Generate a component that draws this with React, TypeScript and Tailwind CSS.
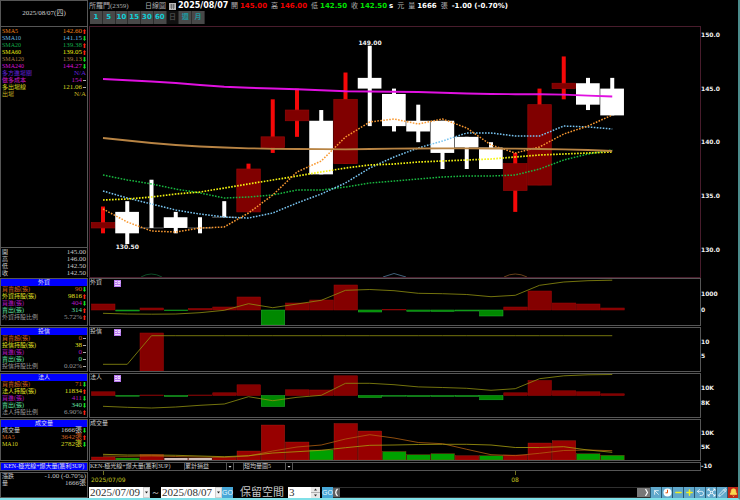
import React, { useState } from 'react';
import { ArrowUpLeft, Bell, Clock, Minimize2, Minus, Pencil, Plus, Undo2 } from 'lucide-react';

type Trend = 'up' | 'down' | 'flat';

interface Row {
  label: string;
  value: string;
  color: string;
  trend?: Trend;
}

interface Candle {
  o: number;
  h: number;
  l: number;
  c: number;
}

const STEP = 24.25;
const cx = (i: number) => 13 + i * STEP;
const priceY = (p: number) => 8 + (150 - p) * 10.72;

const CANDLES: Candle[] = [
  { o: 132, h: 134, l: 131.5, c: 132.5 },
  { o: 133.5, h: 134.5, l: 130.5, c: 131.5 },
  { o: 132, h: 136.5, l: 132, c: 132 },
  { o: 133, h: 133.5, l: 131.5, c: 132 },
  { o: 132, h: 133, l: 131.5, c: 132 },
  { o: 133, h: 134.5, l: 133, c: 133 },
  { o: 133.5, h: 138, l: 133.5, c: 137.5 },
  { o: 139.5, h: 144, l: 139, c: 140.5 },
  { o: 142, h: 145, l: 140.5, c: 143 },
  { o: 142, h: 143, l: 137, c: 137 },
  { o: 138, h: 146.5, l: 138, c: 144 },
  { o: 146, h: 149, l: 141.5, c: 145 },
  { o: 144.5, h: 145, l: 141, c: 141.5 },
  { o: 142, h: 143.5, l: 140, c: 141 },
  { o: 142, h: 142, l: 137.5, c: 139 },
  { o: 140.5, h: 140.5, l: 137.5, c: 139.5 },
  { o: 139.5, h: 140, l: 137.5, c: 137.5 },
  { o: 135.5, h: 139, l: 133.5, c: 138 },
  { o: 136, h: 145, l: 136, c: 143.5 },
  { o: 145, h: 148, l: 144, c: 145.5 },
  { o: 145.5, h: 146, l: 143, c: 143.5 },
  { o: 145, h: 146, l: 142.5, c: 142.5 },
];

// one y per candle
const SMA5 = [182, 195, 204, 205, 201, 200, 186, 168, 145, 134, 110, 95, 92, 97, 92, 101, 118, 126, 120, 107, 99, 88];
const SMA10 = [164, 171, 177, 183, 187, 190, 191, 186, 176, 167, 156, 141, 130, 121, 114, 106, 106, 109, 109, 99, 100, 102];
const SMA20 = [148, 153, 157, 162, 166, 171, 170, 168, 163, 163, 160, 156, 154, 152, 150, 149, 149, 148, 142, 133, 127, 123];
const SMA60 = [173, 172, 170, 167, 165, 161, 157, 153, 149, 145, 141, 138, 137, 135, 134, 133, 132, 130, 128, 127, 126, 125];
const SMA120 = [111, 113.5, 116, 118, 119.5, 120.5, 121.3, 121.8, 122, 122.2, 122.3, 122, 121.7, 121.5, 121.4, 121.4, 121.5, 121.7, 122, 122.3, 123, 124];
const SMA240 = [52, 53.2, 54.5, 56, 58, 59.7, 60.8, 61.5, 62.3, 63.2, 64.2, 64.5, 64.7, 65, 65.8, 66.5, 67, 67.2, 67.2, 67.6, 68.6, 69.5];

const FOREIGN = [6, -1, 2, -0.7, 1.5, 3, 13, -15, 7, 10, 25, -2, 0.6, -1.3, -1.5, -1, -6, 3, 19, 7, 6, 2];
const FOREIGN_LINE = [34.3, 35, 35.2, 35, 33.7, 31.3, 24.7, 28.7, 25, 21.3, 11.3, 10.5, 11.7, 14.3, 14.7, 15.5, 17.7, 16.3, 6.3, 3, 1.7, 1.2];
const TRUST = [0, 0, 38, 0, 0, 0, 0, 0, 0, 0, 0, 0, 0, 0, 0, 0, 0, 0, 0, 0, 0, 0];
const TRUST_LINE = [36.3, 36.3, 7.7, 7.7, 7.7, 7.7, 7.7, 7.7, 7.7, 7.7, 7.7, 7.7, 7.7, 7.7, 7.7, 7.7, 7.7, 7.7, 7.7, 7.7, 7.7, 7.7];
const LEGAL = [3.7, -0.7, 0.5, -1, 0.5, 2.7, 10.7, -11, 5.7, 5.5, 19.7, -2, -0.7, -1, -1, -1, -4.3, 2.7, 15, 4.7, 3.7, 1.7];
const LEGAL_LINE = [32.3, 33.3, 34, 33, 31.3, 30, 22.7, 26.7, 23.3, 21.3, 9.3, 9.3, 10.7, 12.9, 13.5, 14.3, 16.3, 14.7, 4.7, 1.8, 0.8, 0.5];
const VOLUME = [3, 2, 5.5, 2, 2, 2.7, 9, 35, 18, 10, 36.5, 29, 8.5, 5.3, 6.3, 4.3, 4.3, 5, 17, 19.3, 6.3, 4.7];
const VOLUME_COLOR = 'rgrwwrrrrgrrgggrgrrrgg';
const VOL_MA5 = [36, 36.3, 36, 36.5, 37, 37.3, 36, 31, 27, 25, 19, 14.7, 18, 22.5, 23.7, 29.3, 34.7, 35.6, 33.3, 30.5, 30, 30.7];
const VOL_MA10 = [34.3, 35, 35, 35.3, 36, 36.7, 35.7, 33, 31.7, 30.3, 27.7, 25.3, 25, 24.5, 24.3, 24.3, 25, 27.5, 27.5, 26.7, 30, 32.3];

const INDICATORS: Row[] = [
  { label: 'SMA5', value: '142.60', color: 'text-[#f08018]', trend: 'up' },
  { label: 'SMA10', value: '141.15', color: 'text-[#68b8e0]', trend: 'down' },
  { label: 'SMA20', value: '139.38', color: 'text-[#10a848]', trend: 'up' },
  { label: 'SMA60', value: '139.05', color: 'text-[#e8e810]', trend: 'up' },
  { label: 'SMA120', value: '139.13', color: 'text-[#a87840]', trend: 'down' },
  { label: 'SMA240', value: '144.27', color: 'text-[#d810d8]', trend: 'down' },
  { label: '多方進場關', value: 'N/A', color: 'text-[#6020d8]' },
  { label: '做多成本', value: '154', color: 'text-[#c818c8]', trend: 'flat' },
  { label: '多出場線', value: '121.06', color: 'text-[#d8d820]', trend: 'flat' },
  { label: '出場', value: 'N/A', color: 'text-[#c0b020]' },
];

const QUOTE: Row[] = [
  { label: '開', value: '145.00', color: 'text-[#c8c8c8]' },
  { label: '高', value: '146.00', color: 'text-[#c8c8c8]' },
  { label: '低', value: '142.50', color: 'text-[#c8c8c8]' },
  { label: '收', value: '142.50', color: 'text-[#c8c8c8]' },
];

const FOREIGN_ROWS: Row[] = [
  { label: '買賣超(張)', value: '90', color: 'text-[#d06020]', trend: 'down' },
  { label: '外資持股(張)', value: '9816', color: 'text-[#e0e020]', trend: 'up' },
  { label: '買進(張)', value: '404', color: 'text-[#b818c0]', trend: 'down' },
  { label: '賣出(張)', value: '314', color: 'text-[#60e0a0]', trend: 'up' },
  { label: '外資持股比例', value: '5.72%', color: 'text-[#989898]', trend: 'up' },
];

const TRUST_ROWS: Row[] = [
  { label: '買賣超(張)', value: '0', color: 'text-[#d06020]', trend: 'flat' },
  { label: '投信持股(張)', value: '38', color: 'text-[#e0e020]', trend: 'flat' },
  { label: '買進(張)', value: '0', color: 'text-[#b818c0]', trend: 'flat' },
  { label: '賣出(張)', value: '0', color: 'text-[#60e0a0]', trend: 'flat' },
  { label: '投信持股比例', value: '0.02%', color: 'text-[#989898]', trend: 'flat' },
];

const LEGAL_ROWS: Row[] = [
  { label: '買賣超(張)', value: '71', color: 'text-[#d06020]', trend: 'down' },
  { label: '法人持股(張)', value: '11834', color: 'text-[#e0e020]', trend: 'up' },
  { label: '買進(張)', value: '411', color: 'text-[#b818c0]', trend: 'down' },
  { label: '賣出(張)', value: '340', color: 'text-[#60e0a0]', trend: 'down' },
  { label: '法人持股比例', value: '6.90%', color: 'text-[#989898]', trend: 'up' },
];

const VOLUME_ROWS: Row[] = [
  { label: '成交量', value: '1666張', color: 'text-[#d0d0d0]', trend: 'down' },
  { label: 'MA5', value: '3642張', color: 'text-[#d06020]', trend: 'up' },
  { label: 'MA10', value: '2782張', color: 'text-[#d8d820]', trend: 'down' },
];

const PERIODS = ['1', '5', '10', '15', '30', '60', '日', '週', '月'];

function TrendMark({ trend }: { trend: Trend }) {
  return (
    <svg className="w-[3px] h-[5px] ml-px shrink-0" viewBox="0 0 3 5">
      {trend === 'up' && <path d="M1.500 0L3 2H2.300V5H0.700V2H0Z" fill="#ff2010" />}
      {trend === 'down' && <path d="M1.500 5L3 3H2.300V0H0.700V3H0Z" fill="#10e020" />}
      {trend === 'flat' && <path d="M0 2.500H3" stroke="#b0b0b0" />}
    </svg>
  );
}

function Rows({ rows }: { rows: Row[] }) {
  return (
    <dl className="px-px">
      {rows.map((row) => (
        <div key={row.label} className={`flex items-center h-[7px] leading-[7px] ${row.color}`}>
          <dt className="flex-1 text-[6px] whitespace-nowrap">{row.label}</dt>
          <dd className="text-[7px] whitespace-nowrap">{row.value}</dd>
          {row.trend && <TrendMark trend={row.trend} />}
        </div>
      ))}
    </dl>
  );
}

function SidePanel({ title, rows, height }: { title: string; rows: Row[]; height: string }) {
  return (
    <section className={`border border-[#565656] overflow-hidden ${height}`}>
      <h2 className="h-[7px] bg-[#0000ff] text-center text-[6px] leading-[7px] text-[#e0e0f0]">{title}</h2>
      <Rows rows={rows} />
    </section>
  );
}

const toPoints = (ys: number[]) => ys.map((y, i) => `${cx(i)},${y}`).join(' ');

function Line({ ys, color, width = 1, dotted = false }: { ys: number[]; color: string; width?: number; dotted?: boolean }) {
  return (
    <polyline
      points={toPoints(ys)}
      fill="none"
      stroke={color}
      strokeWidth={width}
      strokeDasharray={dotted ? '1.6 1.4' : undefined}
    />
  );
}

function PriceChart() {
  return (
    <svg className="block w-full h-[250px]">
      {CANDLES.map((k, i) => {
        const up = k.c > k.o;
        const top = priceY(Math.max(k.o, k.c));
        const bottom = priceY(Math.min(k.o, k.c));
        const wick = up ? '#f40808' : '#ffffff';
        return (
          <g key={i}>
            {k.o === k.c ? (
              <path d={`M${cx(i) - 12} ${top}H${cx(i) + 12}`} stroke="#606060" />
            ) : (
              !up && <rect x={cx(i) - 12} y={top} width={23.7} height={bottom - top} fill="#ffffff" />
            )}
            <rect x={cx(i) - 2} y={priceY(k.h)} width={4} height={priceY(k.l) - priceY(k.h)} fill={wick} />
            {up && (
              <rect x={cx(i) - 11.7} y={top} width={23.5} height={bottom - top} fill="#800000" stroke="#940808" strokeWidth={0.7} />
            )}
          </g>
        );
      })}
      <Line ys={SMA20} color="#18b840" width={1.5} dotted />
      <Line ys={SMA10} color="#78c4f0" width={1.5} dotted />
      <Line ys={SMA60} color="#f4f410" width={1.7} dotted />
      <Line ys={SMA5} color="#f89830" width={1.5} dotted />
      <Line ys={SMA120} color="#b88444" width={1.8} />
      <Line ys={SMA240} color="#e010e0" width={1.9} />
      <g fill="none" strokeWidth={0.8}>
        <path d="M51 250Q61 244 72 250" stroke="#106030" />
        <path d="M293 250L304 246.500L316 250" stroke="#507898" />
        <path d="M414 250Q425 244 437 250" stroke="#805020" />
      </g>
      <g className="font-['DejaVu_Sans'] text-[6px] font-bold" fill="#f0f0f0" textAnchor="middle">
        <text x={280} y={18}>149.00</text>
        <text x={cx(1)} y={222}>130.50</text>
      </g>
    </svg>
  );
}

function Bars({ values, zero }: { values: number[]; zero: number }) {
  return (
    <>
      {values.map((v, i) =>
        v === 0 ? null : (
          <rect
            key={i}
            x={cx(i) - 11.5}
            y={v > 0 ? zero - v : zero}
            width={23.5}
            height={Math.abs(v)}
            fill={v > 0 ? '#840000' : '#008800'}
            stroke={v > 0 ? '#9c0808' : '#20b030'}
            strokeWidth={0.5}
          />
        )
      )}
    </>
  );
}

function VolumeBars() {
  const fills: Record<string, string> = { r: '#980000', g: '#00a000', w: '#d8d8d8' };
  return (
    <>
      {VOLUME.map((v, i) => (
        <rect key={i} x={cx(i) - 11.5} y={40 - v} width={23.5} height={v} fill={fills[VOLUME_COLOR[i]]} stroke="#b83020" strokeWidth={0.3} />
      ))}
    </>
  );
}

function Axis({ height, marks }: { height: string; marks: [string, number][] }) {
  return (
    <svg className={`block w-[38px] -ml-px shrink-0 ${height}`}>
      {marks.map(([label, y]) => (
        <text key={label} x={1} y={y} className="font-['DejaVu_Sans'] text-[6px] font-bold" fill="#f0f0f0">
          {label}
        </text>
      ))}
    </svg>
  );
}

interface SubPanelProps {
  title: string;
  height: string;
  marks: [string, number][];
  withNote?: boolean;
  children: React.ReactNode;
}

function SubPanel({ title, height, marks, withNote = false, children }: SubPanelProps) {
  return (
    <section className="flex">
      <div className={`relative flex-1 min-w-0 border border-[#565656] ${height}`}>
        <svg className="block w-full h-full">{children}</svg>
        <h3 className="absolute left-0 top-0 text-[6px] leading-[7px] text-[#d0d0d0]">{title}</h3>
        {withNote && (
          <button aria-label={`${title}說明`} className="absolute left-6 top-px size-[7px] bg-[#b878f0]">
            <svg className="block size-full" viewBox="0 0 7 7" fill="none" stroke="#ffffff" strokeWidth={0.7}>
              <path d="M1 1.500H3M1 3.500H3M1 5.500H6M4 1.500H6V3.500H4Z" />
            </svg>
          </button>
        )}
      </div>
      <Axis height={height} marks={marks} />
    </section>
  );
}

function Header() {
  const [period, setPeriod] = useState('日');

  const periodStyle = (p: string) => {
    if (p === period) return 'bg-[#101010] text-[#484848]';
    return p === '週' || p === '月' ? 'bg-[#484848] text-[#2098a0]' : 'bg-[#484848] text-[#10d0d8]';
  };

  return (
    <header className="h-[26px] overflow-hidden">
      <div className="flex items-center h-[11px] pt-px text-[7px] leading-[10px] text-[#b0b0b0] whitespace-nowrap">
        <h1 className="w-14">所羅門(2359)</h1>
        <span className="w-6">日線圖</span>
        <svg className="w-[7px] h-[7px] mr-0.5" viewBox="0 0 7 7">
          <path d="M0 0H7V7H0Z" fill="#b8b8b8" />
          <path d="M1 2H6M1 4H6M2.500 1V6M4.500 1V6" stroke="#505050" strokeWidth={0.6} />
        </svg>
        <time className="w-[53px] font-['DejaVu_Sans'] text-[8px] font-bold text-white">2025/08/07</time>
        <div className="flex gap-1">
          <span className="flex gap-0.5">開<b className="font-['DejaVu_Sans'] text-[#f00000]">145.00</b></span>
          <span className="flex gap-0.5">高<b className="font-['DejaVu_Sans'] text-[#f00000]">146.00</b></span>
          <span className="flex gap-0.5">低<b className="font-['DejaVu_Sans'] text-[#00e000]">142.50</b></span>
          <span className="flex gap-0.5">收<b className="font-['DejaVu_Sans'] text-[#00e000]">142.50</b><b className="font-['DejaVu_Sans'] text-white">s</b></span>
          <span>元</span>
          <span className="flex gap-0.5">量<b className="font-['DejaVu_Sans'] text-white">1666</b></span>
          <span>張</span>
          <b className="font-['DejaVu_Sans'] text-white">-1.00 (-0.70%)</b>
        </div>
      </div>
      <nav className="grid grid-cols-9 w-[115px] h-[13px] ml-px">
        {PERIODS.map((p) => (
          <button
            key={p}
            onClick={() => setPeriod(p)}
            className={`border-r border-[#2c2c2c] font-['DejaVu_Sans','Noto_Sans_CJK_TC'] text-[7px] leading-[13px] font-bold ${periodStyle(p)}`}
          >
            {p}
          </button>
        ))}
      </nav>
    </header>
  );
}

function StrategySelect({ label, option }: { label: string; option: string }) {
  return (
    <span className="flex items-center w-[50px] border-x border-[#565656]">
      <select aria-label={label} className="flex-1 min-w-0 h-[7px] appearance-none bg-transparent p-0 text-[6px] leading-[7px] text-[#d0d0d0]">
        <option>{option}</option>
      </select>
      <svg className="w-[7px] h-[7px] shrink-0 border-l border-[#565656]" viewBox="0 0 6 7">
        <path d="M1.500 3H4.500L3 4.800Z" fill="#e0e0e0" />
      </svg>
    </span>
  );
}

function DateBox({ label, initial }: { label: string; initial: string }) {
  const [value, setValue] = useState(initial);
  return (
    <span className="flex w-[61px] h-[11px] bg-white">
      <input
        aria-label={label}
        value={value}
        onChange={(e) => setValue(e.target.value)}
        className="flex-1 min-w-0 pl-px text-[11px] leading-[11px] text-[#303030] outline-none"
      />
      <button aria-label={`${label}選單`} className="w-[7px] bg-[#f0f0f0] border border-[#d0d0d0]">
        <svg className="block w-full" viewBox="0 0 5 5"><path d="M1 1.500H4L2.500 3.500Z" fill="#202020" /></svg>
      </button>
    </span>
  );
}

function GoButton() {
  return (
    <button className="w-[11px] h-[11px] bg-[#48a8d8] text-center font-['Liberation_Sans'] text-[7px] leading-[11px] text-[#e8f8ff]">GO</button>
  );
}

const TOOLS = [
  { name: '指標', icon: ArrowUpLeft, style: 'bg-[#60a8cc] text-white' },
  { name: '時間', icon: Clock, style: 'bg-[#60a8cc] text-white' },
  { name: '縮小', icon: Minus, style: 'bg-[#60a8cc] text-[#f0f020]' },
  { name: '放大', icon: Plus, style: 'bg-[#60a8cc] text-[#f0f020]' },
  { name: '復原', icon: Undo2, style: 'bg-[#60a8cc] text-white' },
  { name: '還原', icon: Minimize2, style: 'bg-[#60a8cc] text-white' },
  { name: '畫線', icon: Pencil, style: 'bg-[#60a8cc] text-white' },
  { name: '警示', icon: Bell, style: 'bg-[#c02818] text-[#f8d850]' },
];

function ToolIcon({ name, icon: Icon }: { name: string; icon: React.ElementType }) {
  if (name === '時間') {
    return (
      <svg className="size-[9px]" viewBox="0 0 9 9">
        <circle cx={4.5} cy={4.5} r={4} fill="#ffffff" />
        <path d="M4.500 1.800V4.800H2.500" fill="none" stroke="#e05010" strokeWidth={1} />
      </svg>
    );
  }
  if (name === '還原') {
    return (
      <svg className="size-[9px]" viewBox="0 0 9 9" fill="none" stroke="currentColor" strokeWidth={0.8}>
        <path d="M1 1L3.500 3.500M8 1L5.500 3.500M1 8L3.500 5.500M8 8L5.500 5.500M1 3V1H3M6 1H8V3M8 6V8H6M3 8H1V6M3.300 3.300H5.700V5.700H3.300Z" />
      </svg>
    );
  }
  return <Icon size={9} strokeWidth={name === '縮小' || name === '放大' ? 4 : 2} fill={name === '警示' ? 'currentColor' : 'none'} />;
}

function Toolbar() {
  const [space, setSpace] = useState(3);
  return (
    <footer className="flex items-center h-3 whitespace-nowrap">
      <DateBox label="起始日" initial="2025/07/09" />
      <span className="w-[11px] text-center text-[11px] leading-[11px] text-[#e0e0e0]">~</span>
      <DateBox label="結束日" initial="2025/08/07" />
      <GoButton />
      <label htmlFor="space" className="w-[55px] pl-[7px] text-[11px] leading-[11px] text-[#c8c8c8]">保留空間</label>
      <span className="flex w-8 h-[11px] mr-0.5 bg-white">
        <input
          id="space"
          value={space}
          onChange={(e) => setSpace(Number(e.target.value) || 0)}
          className="flex-1 min-w-0 pl-px text-[11px] leading-[11px] text-[#303030] outline-none"
        />
        <span className="flex flex-col w-[9px] bg-[#e8e8e8]">
          <button aria-label="增加" onClick={() => setSpace(space + 1)} className="flex-1 border-b border-[#b0b0b0]">
            <svg className="block w-full h-full" viewBox="0 0 9 5"><path d="M3 3.500H6L4.500 1.500Z" fill="#303030" /></svg>
          </button>
          <button aria-label="減少" onClick={() => setSpace(space - 1)} className="flex-1">
            <svg className="block w-full h-full" viewBox="0 0 9 5"><path d="M3 1.500H6L4.500 3.500Z" fill="#303030" /></svg>
          </button>
        </span>
      </span>
      <GoButton />
      <div className="flex flex-1 h-[11px] border-y border-[#303030]">
        <button aria-label="向左捲動" className="w-[7px] bg-[#606060]">
          <svg className="block w-full h-[9px]" viewBox="0 0 7 9"><path d="M4.500 1Q1 4.500 4.500 8" fill="none" stroke="#ffffff" strokeWidth={1.2} /></svg>
        </button>
        <span className="flex-1" />
        <button aria-label="向右捲動" className="w-[13px] bg-[#787878]">
          <svg className="block w-full h-[9px]" viewBox="0 0 13 9"><path d="M8.500 1L10.500 4.500L8.500 8" fill="none" stroke="#ffffff" strokeWidth={1.2} /></svg>
        </button>
      </div>
      <div className="flex">
        {TOOLS.map((tool) => (
          <button key={tool.name} aria-label={tool.name} className={`flex items-center justify-center w-[11px] h-[11px] border-l border-[#285870] ${tool.style}`}>
            <ToolIcon name={tool.name} icon={tool.icon} />
          </button>
        ))}
      </div>
    </footer>
  );
}

function Sidebar() {
  return (
    <aside className="flex flex-col gap-px w-[88px] shrink-0">
      <div>
        <div className="h-[26px] border border-b-0 border-[#565656] text-center text-[7px] leading-[25px] text-[#d0d0d0]">
          2025/08/07(四)
        </div>
        <div className="h-[221px] pt-px border border-b-0 border-[#565656]">
          <Rows rows={INDICATORS} />
        </div>
        <div className="h-[30px] pt-px border border-b-0 border-[#565656]">
          <Rows rows={QUOTE} />
        </div>
      </div>
      <SidePanel title="外資" rows={FOREIGN_ROWS} height="h-[48px]" />
      <SidePanel title="投信" rows={TRUST_ROWS} height="h-[45px]" />
      <SidePanel title="法人" rows={LEGAL_ROWS} height="h-[45px]" />
      <SidePanel title="成交量" rows={VOLUME_ROWS} height="h-[42px]" />
      <h2 className="h-[9px] border border-[#565656] bg-[#0000ff] text-center text-[6px] leading-[7px] text-[#e0e0f0] whitespace-nowrap">
        KEN-極光線+爆大量(獲利3UP)
      </h2>
      <dl className="flex-1 px-px border border-[#565656] text-[7px] leading-[7px] text-[#c8c8c8]">
        <div className="flex justify-between"><dt className="text-[6px]">漲跌</dt><dd>-1.00 (-0.70%)</dd></div>
        <div className="flex justify-between"><dt className="text-[6px]">量</dt><dd>1666張</dd></div>
      </dl>
    </aside>
  );
}

function App() {
  return (
    <div className="flex gap-px min-h-screen bg-black border-r-2 border-b-2 border-r-[#4c8c8c] border-b-[#80e0e8] font-['Liberation_Serif','Noto_Sans_CJK_TC',serif]">
      <Sidebar />
      <main className="flex flex-col flex-1 min-w-0">
        <Header />
        <div className="flex">
          <div className="flex-1 min-w-0 border border-[#481c2c]">
            <PriceChart />
          </div>
          <Axis
            height="h-[252px]"
            marks={[['150.0', 11], ['145.0', 65], ['140.0', 118], ['135.0', 172], ['130.0', 226]]}
          />
        </div>
        <div className="flex flex-col gap-px">
          <SubPanel title="外資" height="h-[48px]" marks={[['1000', 18], ['0', 34]]} withNote>
            <Bars values={FOREIGN} zero={31} />
            <Line ys={FOREIGN_LINE} color="#909010" width={0.8} />
          </SubPanel>
          <SubPanel title="投信" height="h-[45px]" marks={[['10', 17], ['5', 31]]} withNote>
            <Bars values={TRUST} zero={43} />
            <Line ys={TRUST_LINE} color="#909010" width={0.8} />
          </SubPanel>
          <SubPanel title="法人" height="h-[45px]" marks={[['10K', 17], ['8K', 32]]} withNote>
            <Bars values={LEGAL} zero={21.5} />
            <Line ys={LEGAL_LINE} color="#909010" width={0.8} />
          </SubPanel>
          <SubPanel title="成交量" height="h-[42px]" marks={[['10K', 16], ['5K', 30]]}>
            <VolumeBars />
            <Line ys={VOL_MA5} color="#b06010" width={0.8} />
            <Line ys={VOL_MA10} color="#a8a010" width={0.8} />
          </SubPanel>
          <div className="flex h-[9px]">
            <div className="flex flex-1 gap-[9px] border border-[#565656] text-[6px] leading-[7px] text-[#d0d0d0] whitespace-nowrap">
              <h3 className="w-[85px]">KEN-極光線+爆大量(獲利3UP)</h3>
              <StrategySelect label="損益" option="累計損益" />
              <StrategySelect label="量圖" option="短均量圖5" />
            </div>
            <Axis height="h-[9px]" marks={[['-10', 6]]} />
          </div>
        </div>
        <svg className="block w-full h-[15px] mt-auto">
          <path d="M14.500 0V4M426.500 0V4" stroke="#707020" />
          <g className="font-['DejaVu_Sans'] text-[6px]" fill="#c8c820">
            <text x={2} y={11}>2025/07/09</text>
            <text x={426} y={11} textAnchor="middle">08</text>
          </g>
        </svg>
        <Toolbar />
      </main>
    </div>
  );
}

export default App;
